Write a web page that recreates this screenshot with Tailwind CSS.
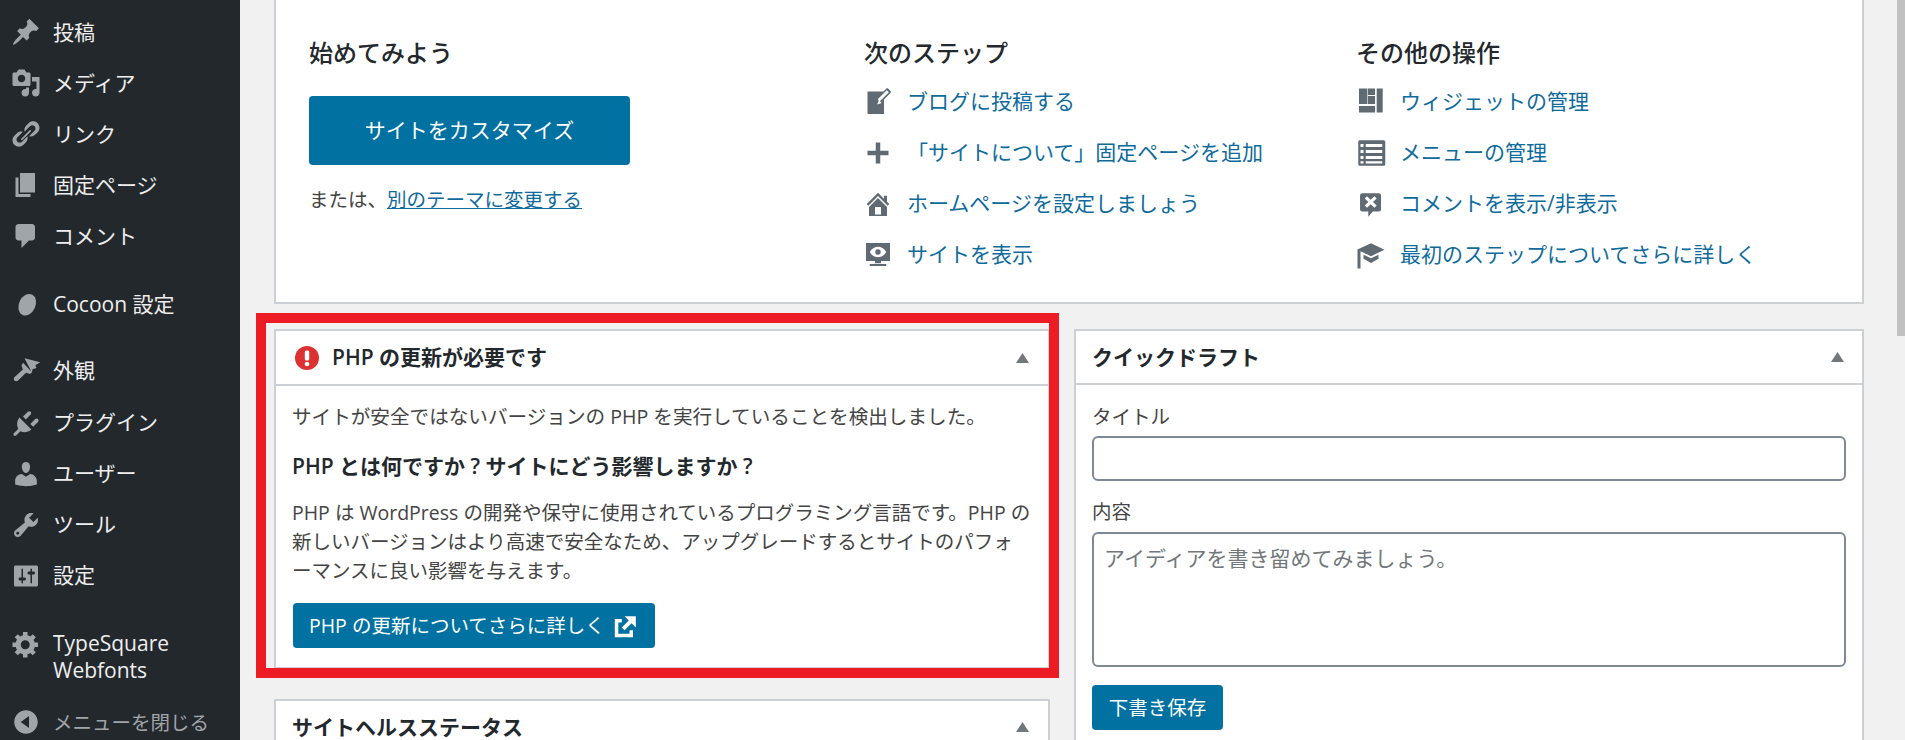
<!DOCTYPE html>
<html lang="ja">
<head>
<meta charset="utf-8">
<title>ダッシュボード</title>
<script src="https://cdn.jsdelivr.net/npm/@tailwindcss/browser@4"></script>
</head>
<body class="m-0 h-[740px] w-[1905px] overflow-hidden bg-[#f1f1f1] font-['Open_Sans','Noto_Sans_CJK_JP',sans-serif] text-[19.5px] leading-[29px] text-[#444]">
<div class="flex h-[740px] w-[1905px] overflow-hidden">

<aside class="flex h-full w-[240px] shrink-0 flex-col bg-[#23282d] pt-[7px] text-[21px] leading-[27px] text-[#eee]">
  <a class="flex h-[51px] items-center"><svg class="ml-[11px] mr-[12px] h-[30px] w-[30px] fill-[#a0a5aa]" viewBox="0 0 20 20"><path d="M10.44 3.02l1.82-1.82 6.36 6.35-1.83 1.82c-1.05-.68-2.48-.57-3.41.36l-.75.75c-.92.93-1.04 2.35-.35 3.41l-1.83 1.82-2.41-2.41-2.8 2.79c-.42.42-3.38 2.71-3.8 2.29s1.86-3.39 2.28-3.81l2.79-2.79L4.1 9.36l1.83-1.82c1.05.69 2.48.57 3.4-.36l.75-.75c.93-.92 1.05-2.35.36-3.41z"/></svg><span>投稿</span></a>
  <a class="flex h-[51px] items-center"><svg class="ml-[11px] mr-[12px] h-[30px] w-[30px] fill-[#a0a5aa]" viewBox="0 0 20 20"><path fill-rule="evenodd" d="M13 11V4c0-.55-.45-1-1-1h-1.67L9 1H5L3.67 3H2c-.55 0-1 .45-1 1v7c0 .55.45 1 1 1h10c.55 0 1-.45 1-1zM7 4.500c1.380 0 2.500 1.120 2.500 2.500S8.380 9.500 7 9.500 4.500 8.380 4.500 7 5.620 4.500 7 4.500zM14 6h5v10.500c0 1.380-1.120 2.500-2.500 2.500S14 17.880 14 16.500s1.120-2.500 2.500-2.500c.17 0 .34.02.5.05V9h-3V6zm-4 8.050V13h2v3.500c0 1.380-1.120 2.500-2.500 2.500S7 17.880 7 16.500 8.120 14 9.500 14c.17 0 .34.02.5.05z"/></svg><span>メディア</span></a>
  <a class="flex h-[51px] items-center"><svg class="ml-[11px] mr-[12px] h-[30px] w-[30px] fill-[#a0a5aa]" viewBox="0 0 20 20"><path d="M17.740 2.760c1.680 1.690 1.680 4.410 0 6.100l-1.530 1.520c-1.120 1.120-2.700 1.490-4.130 1.130l2.100-2.100 1.530-1.520c.84-.84.84-2.200 0-3.050-.84-.84-2.200-.84-3.050 0l-1.530 1.530-2.100 2.100c-.36-1.420 0-3 1.130-4.130l1.520-1.530c1.690-1.680 4.410-1.680 6.100 0zM2.260 17.240c-1.680-1.690-1.680-4.410 0-6.100l1.530-1.520c1.120-1.120 2.700-1.490 4.130-1.130l-2.100 2.100-1.530 1.520c-.84.84-.84 2.200 0 3.050.84.84 2.200.84 3.050 0l1.530-1.530 2.100-2.100c.36 1.420 0 3-1.130 4.130l-1.520 1.530c-1.690 1.680-4.410 1.680-6.100 0zM7.600 13.920l5.570-5.590c.21-.21.21-.55 0-.76-.21-.21-.55-.21-.76 0l-5.590 5.580c-.21.21-.21.55 0 .77.21.21.57.21.78 0z"/></svg><span>リンク</span></a>
  <a class="flex h-[51px] items-center"><svg class="ml-[11px] mr-[12px] h-[30px] w-[30px] fill-[#a0a5aa]" viewBox="0 0 20 20"><path d="M6 15V2h10v13H6zm-1 1h8v2H3V5h2v11z"/></svg><span>固定ページ</span></a>
  <a class="flex h-[51px] items-center"><svg class="ml-[11px] mr-[12px] h-[30px] w-[30px] fill-[#a0a5aa]" viewBox="0 0 20 20"><path d="M5 2h9c1.100 0 2 .9 2 2v7c0 1.100-.9 2-2 2h-2l-5 5v-5H5c-1.100 0-2-.9-2-2V4c0-1.100.9-2 2-2z"/></svg><span>コメント</span></a>

  <a class="mt-[17px] flex h-[51px] items-center"><svg class="ml-[11px] mr-[12px] h-[30px] w-[30px] fill-[#a0a5aa]" viewBox="0 0 20 20"><ellipse cx="10.800" cy="10.500" rx="5.500" ry="7.500" transform="rotate(25 10.800 10.500)"/></svg><span>Cocoon 設定</span></a>

  <a class="mt-4 flex h-[51px] items-center"><svg class="ml-[11px] mr-[12px] h-[30px] w-[30px] fill-[#a0a5aa]" viewBox="0 0 20 20"><path d="M9 1.500l10.500 2.700-3.300 2 .8 1.800-2.700 .8-.3 2.400zM8 4.500l6 6.300-1.300 1.200-2.700-.9-5.300 5.200c-.7.700-1.800.7-2.400 0-.6-.6-.6-1.700 .1-2.300l5.500-5-.9-2.700z"/></svg><span>外観</span></a>
  <a class="mt-px flex h-[51px] items-center"><svg class="ml-[11px] mr-[12px] h-[30px] w-[30px] fill-[#a0a5aa]" viewBox="0 0 20 20"><path d="M13.110 4.360L9.870 7.600 8 5.730l3.240-3.240c.52-.51 1.350-.51 1.870 0 .51.520.51 1.350 0 1.870zm4.900 4.900l-3.240 3.240-1.870-1.870 3.240-3.240c.51-.51 1.350-.51 1.870 0 .51.520.51 1.350 0 1.870zM5.600 6.400l8 8c-2.200 1.900-5 2.300-7.300 1.100l-2.900 2.900c-.4.300-1.100.4-1.500 0-.4-.4-.3-1.100 0-1.500l2.900-2.900C3.600 11.400 3.900 8.500 5.600 6.400z"/></svg><span>プラグイン</span></a>
  <a class="flex h-[51px] items-center"><svg class="ml-[11px] mr-[12px] h-[30px] w-[30px] fill-[#a0a5aa]" viewBox="0 0 20 20"><path d="M10 9.250c-2.270 0-2.730-3.440-2.730-3.440C7 4.020 7.820 2 9.970 2c2.160 0 2.980 2.020 2.710 3.810 0 0-.41 3.440-2.680 3.440zm0 2.570L12.720 10c2.390 0 4.520 2.330 4.520 4.530v2.490s-3.650 1.130-7.240 1.130c-3.650 0-7.240-1.130-7.240-1.130v-2.490c0-2.250 1.940-4.480 4.470-4.480z"/></svg><span>ユーザー</span></a>
  <a class="flex h-[51px] items-center"><svg class="ml-[11px] mr-[12px] h-[30px] w-[30px] fill-[#a0a5aa]" viewBox="0 0 20 20"><path fill-rule="evenodd" d="M16.680 9.770c-1.340 1.340-3.300 1.670-4.950.99l-5.410 6.520c-.99.99-2.590.99-3.570 0-.99-.98-.99-2.580 0-3.570l6.520-5.420c-.68-1.650-.35-3.610.99-4.950 1.280-1.280 3.120-1.620 4.720-1.060l-2.890 2.890 2.820 2.820 2.860-2.870c.53 1.580.18 3.390-1.090 4.650zM3.810 16.210c.4.390 1.030.39 1.420 0 .4-.4.4-1.030 0-1.430-.39-.39-1.020-.39-1.420 0-.39.4-.39 1.030 0 1.430z"/></svg><span>ツール</span></a>
  <a class="flex h-[51px] items-center"><svg class="ml-[11px] mr-[12px] h-[30px] w-[30px] fill-[#a0a5aa]" viewBox="0 0 20 20"><path fill-rule="evenodd" d="M18 16V4c0-.55-.45-1-1-1H3c-.55 0-1 .45-1 1v12c0 .55.45 1 1 1h14c.55 0 1-.45 1-1zM8 11h1c.55 0 1 .45 1 1s-.45 1-1 1H8v1.500c0 .28-.22.5-.5.5s-.5-.22-.5-.5V13H6c-.55 0-1-.45-1-1s.45-1 1-1h1V5.500c0-.28.22-.5.5-.5s.5.22.5.5V11zm5-2h-1c-.55 0-1-.45-1-1s.45-1 1-1h1V5.500c0-.28.22-.5.5-.5s.5.22.5.5V7h1c.55 0 1 .45 1 1s-.45 1-1 1h-1v5.500c0 .28-.22.5-.5.5s-.5-.22-.5-.5V9z"/></svg><span>設定</span></a>

  <a class="mt-[17px] flex h-[78px] items-center"><svg class="mb-[26px] ml-[11px] mr-[12px] h-[30px] w-[30px] shrink-0 fill-[#a0a5aa]" viewBox="0 0 20 20"><path fill-rule="evenodd" d="M18 12h-2.180c-.17.7-.44 1.350-.81 1.930l1.540 1.540-2.100 2.100-1.540-1.540c-.58.36-1.230.64-1.910.81V19H8v-2.180c-.68-.17-1.330-.45-1.910-.81l-1.540 1.540-2.120-2.120 1.540-1.540c-.36-.58-.64-1.230-.81-1.890H1V9h2.180c.17-.7.45-1.350.81-1.940L2.450 5.520l2.100-2.100 1.540 1.540c.58-.37 1.230-.64 1.910-.81V2h3v2.180c.68.17 1.330.44 1.910.81l1.540-1.540 2.120 2.120-1.540 1.540c.36.59.64 1.240.81 1.890H18v3zm-8.500 1.500c1.660 0 3-1.340 3-3s-1.340-3-3-3-3 1.340-3 3 1.340 3 3 3z"/></svg><span>TypeSquare<br>Webfonts</span></a>

  <a class="mt-[8px] flex h-[36px] items-center text-[19.5px] text-[#a0a5aa]"><svg class="ml-[11px] mr-[12px] h-[30px] w-[30px] fill-[#a0a5aa]" viewBox="0 0 20 20"><path fill-rule="evenodd" d="M10 2.160c4.330 0 7.840 3.510 7.840 7.840s-3.510 7.840-7.840 7.840-7.840-3.510-7.840-7.840S5.670 2.160 10 2.160zM12 6 L6.500 10 12 14z"/></svg><span>メニューを閉じる</span></a>
</aside>

<main class="relative h-[740px] min-w-0 flex-1 overflow-hidden pl-[34px] pr-[33px]">
  <section class="flex h-[304px] border-x-2 border-b-2 border-[#ccd0d4] bg-white pl-[33px]">
    <div class="w-[555px] shrink-0 pt-[35px]">
      <h3 class="text-[24px] font-medium leading-[36px] text-[#23282d]">始めてみよう</h3>
      <a class="mt-[25px] flex h-[69px] w-[321px] items-center justify-center rounded bg-[#0071a1] text-[21px] text-white">サイトをカスタマイズ</a>
      <p class="mt-[20px]">または、<a class="text-[#0f6b9c] underline">別のテーマに変更する</a></p>
    </div>

    <div class="w-[492px] shrink-0 pt-[35px]">
      <h3 class="text-[24px] font-medium leading-[36px] text-[#23282d]">次のステップ</h3>
      <ul class="mt-[5px] text-[21px] text-[#0f6b9c]">
        <li class="flex h-[51px] items-center"><svg class="ml-[-1px] mr-[14px] h-[30px] w-[30px] fill-[#606a73]" viewBox="0 0 20 20"><path fill-rule="evenodd" d="M16.890 1.200l1.410 1.410c.39.39.39 1.020 0 1.410L14 8.330V18H3V3h10.670l1.810-1.800c.39-.39 1.030-.39 1.410 0zm-5.660 8.350l6.020-6.010-1.410-1.420-6.020 6.020zm-1.770 2.120l2.950-1.010-1.940-1.920z"/></svg>ブログに投稿する</li>
        <li class="flex h-[51px] items-center"><svg class="ml-[-1px] mr-[14px] h-[30px] w-[30px] fill-[#606a73]" viewBox="0 0 20 20"><path d="M17 8.500v3h-5.500v5.500h-3v-5.500H3v-3h5.500V3h3v5.500z"/></svg>「サイトについて」固定ページを追加</li>
        <li class="flex h-[51px] items-center"><svg class="ml-[-1px] mr-[14px] h-[30px] w-[30px] fill-[#606a73]" viewBox="0 0 20 20"><path fill-rule="evenodd" d="M16 8.500l1.530 1.530-1.060 1.060L10 4.620l-6.470 6.470-1.060-1.060L10 2.500l4 4v-2h2v4zm-6-2.460l6 5.990V18H4v-5.970zM12 17v-5H8v5h4z"/></svg>ホームページを設定しましょう</li>
        <li class="flex h-[51px] items-center"><svg class="ml-[-1px] mr-[14px] h-[30px] w-[30px] fill-[#606a73]" viewBox="0 0 20 20"><path d="M2 2h16v12H2z"/><path class="fill-white" d="M4.500 8c1.500-2.500 3.500-3.500 5.500-3.500s4 1 5.500 3.500c-1.500 2.500-3.500 3.500-5.500 3.500S6 10.500 4.500 8z"/><circle cx="10" cy="8" r="1.800"/><path d="M8 14h4v1.500H8zM4.500 16h11v1.300h-11z"/></svg>サイトを表示</li>
      </ul>
    </div>

    <div class="flex-1 pt-[35px]">
      <h3 class="text-[24px] font-medium leading-[36px] text-[#23282d]">その他の操作</h3>
      <ul class="mt-[5px] text-[21px] text-[#0f6b9c]">
        <li class="flex h-[51px] items-center"><svg class="mr-[14px] h-[30px] w-[30px] fill-[#606a73]" viewBox="0 0 20 20"><path d="M2 1h5.600v10.300H2zM8 1h4.700v4.300H8zM8 6h4.700v5.300H8zM2 12.700h10.700V17H2zM13.800 1h4v16h-4z"/></svg>ウィジェットの管理</li>
        <li class="flex h-[51px] items-center"><svg class="mr-[14px] h-[30px] w-[30px] fill-[#606a73]" viewBox="0 0 20 20"><path fill-rule="evenodd" d="M2.500 1.500h16a1 1 0 0 1 1 1v15a1 1 0 0 1-1 1h-16a1 1 0 0 1-1-1v-15a1 1 0 0 1 1-1zM3 4v2h2V4zM6.500 4v2h11V4zM3 8v2h2V8zM6.500 8v2h11V8zM3 12v2h2v-2zM6.500 12v2h11v-2zM3 15.500V17h2v-1.500zM6.500 15.500V17h11v-1.500z"/></svg>メニューの管理</li>
        <li class="flex h-[51px] items-center"><svg class="mr-[14px] h-[30px] w-[30px] fill-[#606a73]" viewBox="0 0 20 20"><path fill-rule="evenodd" d="M4.200 2.900h11a1.500 1.500 0 0 1 1.500 1.500v9.100a1.500 1.500 0 0 1-1.500 1.500h-4l-3 3.500v-3.500h-4a1.500 1.500 0 0 1-1.500-1.500V4.400a1.500 1.500 0 0 1 1.500-1.500zM7.300 4.900L5.800 6.400l2.500 2.300-2.500 2.300 1.500 1.500 2.500-2.400 2.500 2.400 1.500-1.500-2.500-2.300 2.500-2.300-1.500-1.500-2.500 2.300z"/></svg>コメントを表示/非表示</li>
        <li class="flex h-[51px] items-center"><svg class="mr-[14px] h-[30px] w-[30px] fill-[#606a73]" viewBox="0 0 20 20"><path d="M10 2.200l9 4.300-9 4.300-7-3.300V19H1V6.300zM5 9.800l5 2.400 5-2.400v2.700l-5 2.800-5-2.800z"/></svg>最初のステップについてさらに詳しく</li>
      </ul>
    </div>
  </section>

  <div class="mt-[25px] flex items-start gap-[24px]">
    <div class="w-[776px] shrink-0">
      <section class="h-[340px] border-2 border-[#ccd0d4] bg-white">
        <header class="flex h-[55px] items-center justify-between border-b-2 border-[#ccd0d4] pl-[19px] pr-[19px]">
          <h2 class="flex items-center gap-[13px] text-[21px] font-semibold text-[#23282d]">
            <svg class="h-[24px] w-[24px]" viewBox="0 0 24 24"><circle cx="12" cy="12" r="12" fill="#dc3232"/><rect x="9.800" y="4.500" width="4.400" height="10" rx="1.500" fill="#fff"/><rect x="9.800" y="16" width="4.400" height="4" rx="1.500" fill="#fff"/></svg>
            PHP の更新が必要です
          </h2>
          <svg class="h-[10px] w-[13px] fill-[#72777c]" viewBox="0 0 13 10"><path d="M6.500 0L13 10H0z"/></svg>
        </header>
        <div class="px-[16px] pt-[16px]">
          <p class="text-[19.6px]">サイトが安全ではないバージョンの PHP を実行していることを検出しました。</p>
          <h3 class="mt-[21px] text-[21px] font-semibold text-[#23282d]">PHP とは何ですか ? サイトにどう影響しますか ?</h3>
          <p class="mt-[17px]">PHP は WordPress の開発や保守に使用されているプログラミング言語です。PHP の新しいバージョンはより高速で安全なため、アップグレードするとサイトのパフォーマンスに良い影響を与えます。</p>
          <a class="ml-px mt-[18px] flex h-[45px] w-[362px] items-center gap-[7px] rounded bg-[#0071a1] pl-[16px] text-white">PHP の更新についてさらに詳しく
            <svg class="h-[28px] w-[28px] fill-white" viewBox="0 0 20 20"><path d="M9 3h8v8l-3-3-5 5-2-2 5-5zM2 5h5v2.500H4.500v8h8V13H15v5H2z"/></svg>
          </a>
        </div>
      </section>
      <section class="mt-[30px] border-2 border-[#ccd0d4] bg-white">
        <header class="flex h-[52px] items-center justify-between pl-[16px] pr-[19px]">
          <h2 class="text-[21px] font-semibold leading-[24px] text-[#23282d]">サイトヘルスステータス</h2>
          <svg class="h-[10px] w-[13px] fill-[#72777c]" viewBox="0 0 13 10"><path d="M6.500 0L13 10H0z"/></svg>
        </header>
      </section>
    </div>

    <section class="h-[500px] flex-1 border-2 border-[#ccd0d4] bg-white">
      <header class="flex h-[54px] items-center justify-between border-b-2 border-[#ccd0d4] pl-[16px] pr-[18px]">
        <h2 class="text-[21px] font-semibold text-[#23282d]">クイックドラフト</h2>
        <svg class="h-[10px] w-[13px] fill-[#72777c]" viewBox="0 0 13 10"><path d="M6.500 0L13 10H0z"/></svg>
      </header>
      <div class="px-[16px] pt-[17px]">
        <label class="block">タイトル</label>
        <input type="text" class="mt-[5px] block h-[45px] w-[754px] rounded-md border-2 border-[#7e8993] bg-white">
        <label class="mt-[16px] block">内容</label>
        <textarea placeholder="アイディアを書き留めてみましょう。" class="mt-[6px] block h-[135px] w-[754px] resize-none rounded-md border-2 border-[#7e8993] bg-white px-[10px] pt-[10px] text-[21px] leading-[29px] placeholder:text-[#72777c]"></textarea>
        <a class="mt-[18px] flex h-[45px] w-[131px] items-center justify-center rounded bg-[#0071a1] text-white">下書き保存</a>
      </div>
    </section>
  </div>

  <div class="pointer-events-none absolute left-[16px] top-[313px] h-[365px] w-[803px] border-[10px] border-[#ed1c24]"></div>
</main>

<div class="h-full w-2 shrink-0 bg-[#f1f1f1]"><div class="h-[336px] w-full bg-[#c1c1c1]"></div></div>
</div>
</body>
</html>
